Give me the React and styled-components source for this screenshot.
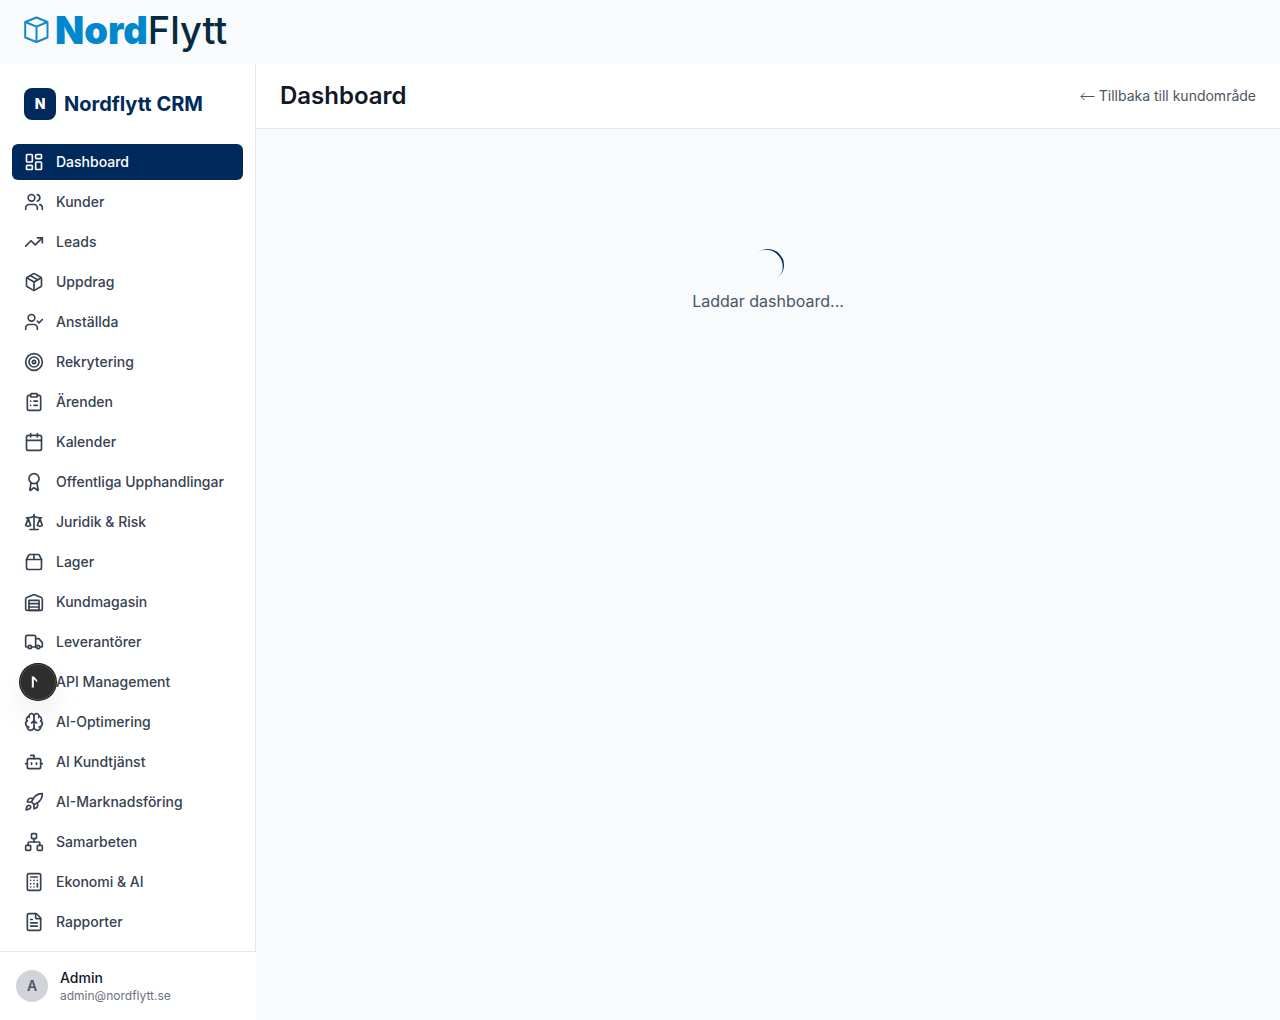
import React from "react";
import styled, { createGlobalStyle } from "styled-components";
import {
  LayoutDashboard, Users, TrendingUp, Package, UserCheck, Target, ClipboardList,
  Calendar, Award, Scale, Package2, Truck, Code, Brain, Bot, Rocket,
  Network, Calculator, FileText,
} from "lucide-react";

const GlobalStyle = createGlobalStyle`
  *, *::before, *::after { box-sizing: border-box; }
  body {
    margin: 0;
    background: #f8fafc;
    color: #111827;
    font-family: Inter, "Liberation Sans", sans-serif;
    font-size: 16px;
    line-height: 24px;
  }
  a { color: inherit; text-decoration: none; }
`;

const Page = styled.div`
  display: flex;
  flex-direction: column;
  min-height: 100vh;
`;

const SiteHeader = styled.header`
  display: flex;
  align-items: center;
  height: 64px;
  padding: 0 24px 4px;
`;

const Logo = styled.a`
  display: flex;
  align-items: center;
  gap: 5px;
`;

const Wordmark = styled.span`
  font-size: 38px;
  line-height: 40px;
  white-space: nowrap;
`;

const WordPart = styled.span`
  color: ${(p) => (p.$strong ? "#0087cd" : "#062b40")};
  font-weight: ${(p) => (p.$strong ? 900 : 500)};
`;

const Shell = styled.div`
  display: flex;
  flex: 1;
`;

const Sidebar = styled.aside`
  display: flex;
  flex-direction: column;
  flex: 0 0 256px;
  background: #ffffff;
`;

const SidebarBody = styled.div`
  flex: 1;
  border-right: 1px solid #e5e7eb;
`;

const Brand = styled.div`
  display: flex;
  align-items: center;
  gap: 8px;
  padding: 24px;
`;

const BrandMark = styled.span`
  display: grid;
  place-items: center;
  width: 32px;
  height: 32px;
  border-radius: 8px;
  background: #002a5c;
  color: #ffffff;
  font-size: 14px;
  font-weight: 800;
`;

const BrandName = styled.span`
  color: #002a5c;
  font-size: 20px;
  line-height: 28px;
  font-weight: 700;
`;

const Nav = styled.nav`
  display: flex;
  flex-direction: column;
  gap: 4px;
  padding: 0 12px;
`;

const NavLink = styled.a`
  display: flex;
  align-items: center;
  gap: 12px;
  padding: 8px 12px;
  border-radius: 6px;
  background: ${(p) => (p.$active ? "#002a5c" : "transparent")};
  color: ${(p) => (p.$active ? "#ffffff" : "#374151")};
  font-size: 14px;
  line-height: 20px;
  font-weight: 500;
  white-space: nowrap;
`;

const Account = styled.div`
  display: flex;
  align-items: center;
  gap: 12px;
  padding: 16px;
  border-top: 1px solid #e5e7eb;
`;

const Avatar = styled.span`
  display: grid;
  place-items: center;
  width: 32px;
  height: 32px;
  border-radius: 50%;
  background: #d1d5db;
  color: #4b5563;
  font-size: 14px;
  font-weight: 600;
`;

const AccountText = styled.div`
  display: flex;
  flex-direction: column;
`;

const AccountName = styled.span`
  font-size: 14px;
  line-height: 20px;
  font-weight: 500;
`;

const AccountMail = styled.span`
  color: #6b7280;
  font-size: 12px;
  line-height: 16px;
`;

const Main = styled.main`
  display: flex;
  flex-direction: column;
  flex: 1;
`;

const TitleBar = styled.div`
  display: flex;
  align-items: center;
  justify-content: space-between;
  height: 65px;
  padding: 0 24px;
  background: #ffffff;
  border-bottom: 1px solid #e5e7eb;
`;

const Title = styled.h1`
  margin: 0;
  font-size: 24px;
  line-height: 32px;
  font-weight: 600;
`;

const BackLink = styled.a`
  display: flex;
  align-items: center;
  gap: 4px;
  color: #4b5563;
  font-size: 14px;
  line-height: 20px;
`;

const Content = styled.div`
  padding: 24px;
`;

const Loading = styled.div`
  display: flex;
  flex-direction: column;
  align-items: center;
  justify-content: center;
  gap: 8px;
  height: 256px;
  color: #4b5563;
`;

const Spinner = styled.span`
  width: 32px;
  height: 32px;
  border-radius: 50%;
  border-bottom: 2px solid #002a5c;
  transform: rotate(-127deg);
`;

const DevButton = styled.button`
  position: fixed;
  left: 20px;
  bottom: 320px;
  display: grid;
  place-items: center;
  width: 36px;
  height: 36px;
  padding: 0;
  border: 0;
  border-radius: 50%;
  background: #2e2e2e;
  box-shadow: 0 0 0 1px #171717, inset 0 0 0 1px #4b4b4b, 0 16px 32px -8px rgba(0, 0, 0, 0.24);
`;

const links = [
  ["Dashboard", LayoutDashboard],
  ["Kunder", Users],
  ["Leads", TrendingUp],
  ["Uppdrag", Package],
  ["Anställda", UserCheck],
  ["Rekrytering", Target],
  ["Ärenden", ClipboardList],
  ["Kalender", Calendar],
  ["Offentliga Upphandlingar", Award],
  ["Juridik & Risk", Scale],
  ["Lager", Package2],
  ["Kundmagasin", WarehouseIcon],
  ["Leverantörer", Truck],
  ["API Management", Code],
  ["AI-Optimering", Brain],
  ["AI Kundtjänst", Bot],
  ["AI-Marknadsföring", Rocket],
  ["Samarbeten", Network],
  ["Ekonomi & AI", Calculator],
  ["Rapporter", FileText],
];

function WarehouseIcon({ size }) {
  return (
    <svg width={size} height={size} viewBox="0 0 24 24" fill="none" stroke="currentColor" strokeWidth="2" strokeLinecap="round" strokeLinejoin="round" aria-hidden="true">
      <path d="M22 8.35V20a2 2 0 0 1-2 2H4a2 2 0 0 1-2-2V8.35A2 2 0 0 1 3.26 6.5l8-3.2a2 2 0 0 1 1.48 0l8 3.2A2 2 0 0 1 22 8.35Z" />
      <path d="M6 18h12M6 14h12" />
      <rect width="12" height="12" x="6" y="10" />
    </svg>
  );
}

function BackArrow() {
  return (
    <svg width="15" height="10" viewBox="0 0 15 10" fill="none" stroke="currentColor" strokeLinejoin="round" aria-hidden="true">
      <path d="M14.500 5.500H1M4.500 2 1 5.500 4.500 9" />
    </svg>
  );
}

function BoxLogo() {
  return (
    <svg width="26" height="28" viewBox="0 0 26 28" fill="none" stroke="#1688c9" strokeWidth="2" strokeLinejoin="round" aria-hidden="true">
      <path d="M12.500 1.500 23.500 6v15.500L12.500 26 1.200 21.500V6z" />
      <path d="M1.200 6l11.300 4.700L23.500 6M12.500 10.700V26" />
    </svg>
  );
}

export default function App() {
  return (
    <>
      <GlobalStyle />
      <Page>
        <SiteHeader>
          <Logo href="#">
            <BoxLogo />
            <Wordmark>
              <WordPart $strong>Nord</WordPart>
              <WordPart>Flytt</WordPart>
            </Wordmark>
          </Logo>
        </SiteHeader>
        <Shell>
          <Sidebar>
            <SidebarBody>
              <Brand>
                <BrandMark>N</BrandMark>
                <BrandName>Nordflytt CRM</BrandName>
              </Brand>
              <Nav>
                {links.map(([label, Icon], i) => (
                  <NavLink key={label} href="#" $active={i === 0}>
                    <Icon size={20} />
                    {label}
                  </NavLink>
                ))}
              </Nav>
            </SidebarBody>
            <Account>
              <Avatar>A</Avatar>
              <AccountText>
                <AccountName>Admin</AccountName>
                <AccountMail>admin@nordflytt.se</AccountMail>
              </AccountText>
            </Account>
          </Sidebar>
          <Main>
            <TitleBar>
              <Title>Dashboard</Title>
              <BackLink href="#">
                <BackArrow />
                Tillbaka till kundområde
              </BackLink>
            </TitleBar>
            <Content>
              <Loading role="status">
                <Spinner />
                <span>Laddar dashboard...</span>
              </Loading>
            </Content>
          </Main>
        </Shell>
      </Page>
      <DevButton type="button" aria-label="Open developer tools">
        <svg width="36" height="36" viewBox="0 0 36 36" fill="#ffffff" aria-hidden="true">
          <path d="M11.800 12.500H14l3.200 3.700v2.300L13.800 15v8.500h-2z" />
        </svg>
      </DevButton>
    </>
  );
}
